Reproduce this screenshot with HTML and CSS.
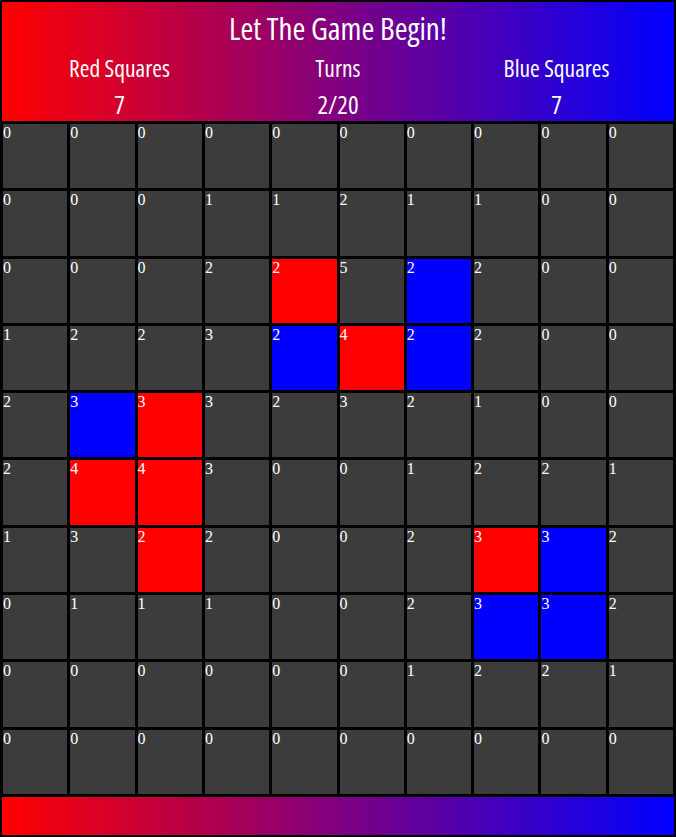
FILE: index.html
```html
<!DOCTYPE html>
<html>
<head>
<meta charset="utf-8">
<link rel="stylesheet" href="styles.css">
</head>
<body>
<header class="top">
  <h1 class="title">Let The Game Begin!</h1>
  <div class="stats">
    <div class="stat"><div class="label">Red Squares</div><div class="value">7</div></div>
    <div class="stat"><div class="label">Turns</div><div class="value">2/20</div></div>
    <div class="stat"><div class="label">Blue Squares</div><div class="value">7</div></div>
  </div>
</header>
<main class="board">
  <div class="cell">0</div><div class="cell">0</div><div class="cell">0</div><div class="cell">0</div><div class="cell">0</div><div class="cell">0</div><div class="cell">0</div><div class="cell">0</div><div class="cell">0</div><div class="cell">0</div>
  <div class="cell">0</div><div class="cell">0</div><div class="cell">0</div><div class="cell">1</div><div class="cell">1</div><div class="cell">2</div><div class="cell">1</div><div class="cell">1</div><div class="cell">0</div><div class="cell">0</div>
  <div class="cell">0</div><div class="cell">0</div><div class="cell">0</div><div class="cell">2</div><div class="cell red">2</div><div class="cell">5</div><div class="cell blue">2</div><div class="cell">2</div><div class="cell">0</div><div class="cell">0</div>
  <div class="cell">1</div><div class="cell">2</div><div class="cell">2</div><div class="cell">3</div><div class="cell blue">2</div><div class="cell red">4</div><div class="cell blue">2</div><div class="cell">2</div><div class="cell">0</div><div class="cell">0</div>
  <div class="cell">2</div><div class="cell blue">3</div><div class="cell red">3</div><div class="cell">3</div><div class="cell">2</div><div class="cell">3</div><div class="cell">2</div><div class="cell">1</div><div class="cell">0</div><div class="cell">0</div>
  <div class="cell">2</div><div class="cell red">4</div><div class="cell red">4</div><div class="cell">3</div><div class="cell">0</div><div class="cell">0</div><div class="cell">1</div><div class="cell">2</div><div class="cell">2</div><div class="cell">1</div>
  <div class="cell">1</div><div class="cell">3</div><div class="cell red">2</div><div class="cell">2</div><div class="cell">0</div><div class="cell">0</div><div class="cell">2</div><div class="cell red">3</div><div class="cell blue">3</div><div class="cell">2</div>
  <div class="cell">0</div><div class="cell">1</div><div class="cell">1</div><div class="cell">1</div><div class="cell">0</div><div class="cell">0</div><div class="cell">2</div><div class="cell blue">3</div><div class="cell blue">3</div><div class="cell">2</div>
  <div class="cell">0</div><div class="cell">0</div><div class="cell">0</div><div class="cell">0</div><div class="cell">0</div><div class="cell">0</div><div class="cell">1</div><div class="cell">2</div><div class="cell">2</div><div class="cell">1</div>
  <div class="cell">0</div><div class="cell">0</div><div class="cell">0</div><div class="cell">0</div><div class="cell">0</div><div class="cell">0</div><div class="cell">0</div><div class="cell">0</div><div class="cell">0</div><div class="cell">0</div>
</main>
<footer class="bottom"></footer>
</body>
</html>
```

FILE: styles.css
```css
html, body {
  margin: 0;
  padding: 0;
  background: #000;
}
body {
  width: 676px;
  height: 837px;
  overflow: hidden;
}
.top {
  margin: 2px 2px 0 2px;
  height: 119px;
  background: linear-gradient(to right, #ff0000, #0000ff);
  color: #fff;
  font-family: "Open Sans", sans-serif;
  font-stretch: condensed;
  font-weight: 500;
  text-align: center;
  display: flex;
  flex-direction: column;
  align-items: center;
}
.title {
  margin: 0;
  font-size: 31px;
  font-weight: 500;
  line-height: 31px;
  padding-top: 10.5px;
}
.stats {
  display: grid;
  grid-template-columns: repeat(3, 218.5px);
  margin-top: 13.5px;
}
.label {
  font-size: 23.5px;
  line-height: 23.5px;
}
.value {
  font-size: 25px;
  line-height: 25px;
  margin-top: 11px;
}
.board {
  display: grid;
  grid-template-columns: repeat(10, 1fr);
  grid-auto-rows: 64.3px;
  gap: 3px;
  padding: 3px 3px 0 3px;
}
.cell {
  background: #3c3c3c;
  color: #fff;
  font-family: "Liberation Serif", "Times New Roman", serif;
  font-size: 16px;
  line-height: 1;
  padding-top: 1px;
}
.cell.red { background: #ff0000; }
.cell.blue { background: #0000ff; }
.bottom {
  margin: 3px 2px 0 2px;
  height: 38px;
  background: linear-gradient(to right, #ff0000, #0000ff);
}
```
